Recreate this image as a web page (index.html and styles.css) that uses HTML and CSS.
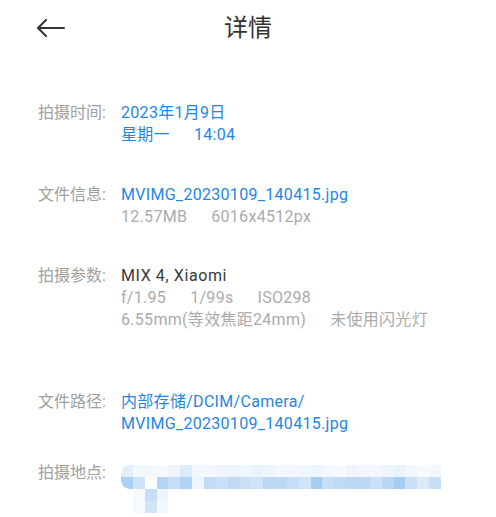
FILE: index.html
```html
<!DOCTYPE html>
<html lang="zh-CN">
<head>
<meta charset="utf-8">
<title>详情</title>
<link rel="stylesheet" href="styles.css">
</head>
<body>
<div class="page">
  <header class="header">
    <div class="back">
      <svg width="28" height="18" viewBox="0 0 28 18" fill="none" stroke="#333" stroke-width="2" stroke-linecap="round" stroke-linejoin="round">
        <path d="M9 1 L1 9 L9 17"/>
        <path d="M1.5 9 H27"/>
      </svg>
    </div>
    <h1 class="title">详情</h1>
    <div class="spacer"></div>
  </header>

  <main class="content">
    <div class="row r-time">
      <div class="label">拍摄时间:</div>
      <div class="value">
        <div class="line blue">2023年1月9日</div>
        <div class="line blue"><span>星期一</span><span class="sep">14:04</span></div>
      </div>
    </div>

    <div class="row r-file">
      <div class="label">文件信息:</div>
      <div class="value">
        <div class="line blue">MVIMG_20230109_140415.jpg</div>
        <div class="line gray"><span>12.57MB</span><span class="sep">6016x4512px</span></div>
      </div>
    </div>

    <div class="row r-param">
      <div class="label">拍摄参数:</div>
      <div class="value">
        <div class="line dark">MIX 4, Xiaomi</div>
        <div class="line gray"><span>f/1.95</span><span class="sep">1/99s</span><span class="sep">ISO298</span></div>
        <div class="line gray"><span>6.55mm(等效焦距24mm)</span><span class="sep">未使用闪光灯</span></div>
      </div>
    </div>

    <div class="row r-path">
      <div class="label">文件路径:</div>
      <div class="value">
        <div class="line blue">内部存储/DCIM/Camera/</div>
        <div class="line blue">MVIMG_20230109_140415.jpg</div>
      </div>
    </div>

    <div class="row r-loc">
      <div class="label">拍摄地点:</div>
      <div class="value">
        <div class="mosaic">
          <div class="mrow r1">
            <i style="background:#e4eefb"></i><i style="background:#f3f8fe"></i><i style="background:#f3f8fe"></i><i style="background:#f6f9fe"></i><i style="background:#eef5fd"></i><i style="background:#dcebfa"></i><i style="background:#f3f8fe"></i><i style="background:#f3f8fe"></i><i style="background:#eef5fd"></i><i style="background:#eef5fd"></i><i style="background:#f0f6fd"></i><i style="background:#eaf2fc"></i><i style="background:#eef5fd"></i><i style="background:#f3f8fe"></i><i style="background:#f3f8fe"></i><i style="background:#f0f6fd"></i><i style="background:#eef5fd"></i><i style="background:#f3f8fe"></i><i style="background:#f6f9fe"></i><i style="background:#eef5fd"></i><i style="background:#f3f8fe"></i><i style="background:#f3f8fe"></i><i style="background:#eef5fd"></i><i style="background:#eaf2fc"></i><i style="background:#f3f8fe"></i><i style="background:#f6f9fe"></i><i style="background:#f3f8fe"></i>
          </div>
          <div class="mrow r2">
            <i style="background:#a9cff5"></i><i style="background:#cfe3f8"></i><i style="background:#ffffff"></i><i style="background:#b3d4f5"></i><i style="background:#c6def7"></i><i style="background:#b0d3f5"></i><i style="background:#eef5fd"></i><i style="background:#c2dcf6"></i><i style="background:#c9e0f7"></i><i style="background:#c0daf6"></i><i style="background:#c9e0f7"></i><i style="background:#d2e5f8"></i><i style="background:#bcd8f6"></i><i style="background:#bcd8f6"></i><i style="background:#c6def7"></i><i style="background:#d2e5f8"></i><i style="background:#a3cdf4"></i><i style="background:#c6def7"></i><i style="background:#c0daf6"></i><i style="background:#bcd8f6"></i><i style="background:#bcd8f6"></i><i style="background:#c9e0f7"></i><i style="background:#b9d7f5"></i><i style="background:#a3cdf4"></i><i style="background:#c9e0f7"></i><i style="background:#dbeaf9"></i><i style="background:#c6def7"></i>
          </div>
          <div class="mrow r3">
            <i></i><i style="background:#f6fafe"></i><i style="background:#c6def7"></i><i style="background:#eef5fd"></i>
          </div>
          <div class="mrow r4">
            <i></i><i style="background:#f6fafe"></i><i style="background:#d2e5f8"></i><i style="background:#f3f8fe"></i>
          </div>
        </div>
      </div>
    </div>
  </main>
</div>
</body>
</html>
```

FILE: styles.css
```css
html, body {
  margin: 0;
  padding: 0;
  background: #ffffff;
}

.page {
  width: 496px;
  height: 517px;
  overflow: hidden;
  font-family: Roboto, "Noto Sans CJK SC", sans-serif;
}

.header {
  display: grid;
  grid-template-columns: 1fr auto 1fr;
  align-items: center;
  height: 56px;
}

.back {
  padding-left: 37px;
  display: flex;
  align-items: center;
}

.back svg {
  display: block;
}

.title {
  margin: 0;
  font-size: 24px;
  font-weight: 400;
  line-height: 28px;
  color: #333333;
}

.content {
  padding: 46px 0 0 38px;
}

.row {
  display: flex;
  font-size: 16px;
  line-height: 22px;
}

.r-file { margin-top: 38px; }
.r-param { margin-top: 37px; }
.r-path { margin-top: 60px; }
.r-loc { margin-top: 27px; }

.label {
  width: 83px;
  flex: none;
  color: #a0a0a0;
}

.value {
  display: flex;
  flex-direction: column;
}

.line {
  white-space: nowrap;
  letter-spacing: 0.3px;
}

.blue { color: #1f86e6; }
.gray { color: #ababab; }
.dark { color: #3a3a3a; letter-spacing: 0.6px; }

.sep {
  margin-left: 24px;
}

.mosaic {
  margin-top: 3px;
  width: 320px;
  display: flex;
  flex-direction: column;
}

.mrow {
  display: grid;
  grid-template-columns: repeat(27, 1fr);
  height: 12px;
}

.mrow i {
  display: block;
}

.r1 i:first-child { border-top-left-radius: 9px; }
.r2 i:first-child { border-bottom-left-radius: 9px; }
```
